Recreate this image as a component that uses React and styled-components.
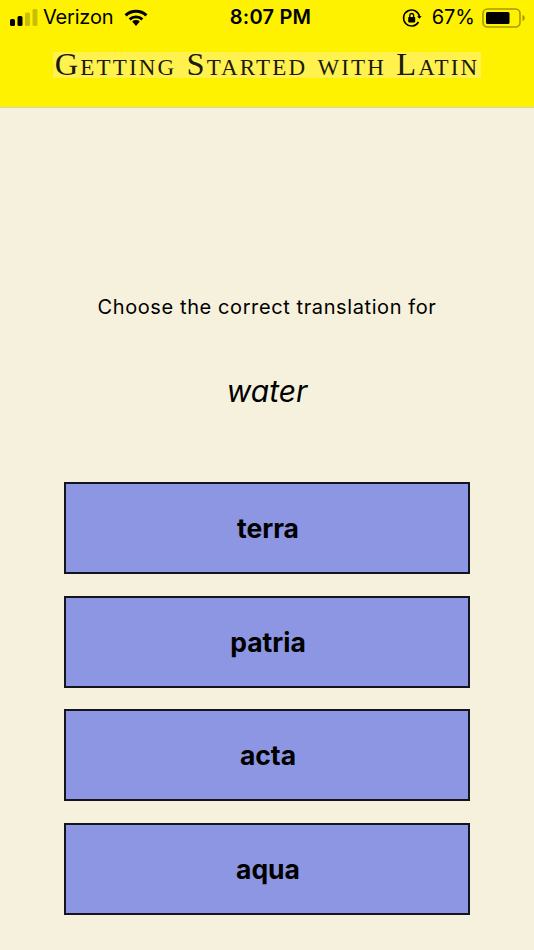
import styled, { createGlobalStyle } from "styled-components";

const GlobalStyle = createGlobalStyle`
  html, body {
    margin: 0;
    padding: 0;
    height: 100%;
    background: #f6f1dc;
  }
  body {
    font-family: Inter, "Liberation Sans", sans-serif;
    color: #000;
  }
`;

const Page = styled.div`
  width: 534px;
  height: 950px;
  display: flex;
  flex-direction: column;
  overflow: hidden;
  background: #f6f1dc;
`;

const Header = styled.header`
  height: 107px;
  background: #fff200;
  border-bottom: 1px solid #d8d3b4;
  display: flex;
  flex-direction: column;
  align-items: center;
  flex-shrink: 0;
`;

const StatusBar = styled.div`
  width: 100%;
  height: 35px;
  margin-bottom: 17px;
  padding: 0 9px 0 10px;
  box-sizing: border-box;
  display: grid;
  grid-template-columns: 1fr auto 1fr;
  align-items: center;
  font-size: 20px;
  line-height: 35px;
`;

const StatusLeft = styled.div`
  display: flex;
  align-items: center;
  gap: 5px;
`;

const Carrier = styled.span`
  margin-right: 6px;
  letter-spacing: -0.2px;
`;

const Clock = styled.span`
  margin-left: 6px;
  font-weight: 600;
  letter-spacing: 0.2px;
`;

const StatusRight = styled.div`
  display: flex;
  align-items: center;
  justify-content: flex-end;
  gap: 10px;
`;

const Percent = styled.span`
  margin-right: -3px;
`;

const LogoText = styled.div`
  width: 428px;
  height: 26px;
  background: #fff24f;
  color: #1c1a0a;
  font-family: "Liberation Serif", serif;
  font-variant: small-caps;
  font-size: 32.5px;
  line-height: 25px;
  letter-spacing: 2.15px;
  text-align: center;
  white-space: nowrap;
`;

const Main = styled.main`
  flex: 1;
  display: flex;
  flex-direction: column;
  align-items: center;
  padding-top: 187px;
`;

const Prompt = styled.p`
  margin: 0 0 54px;
  font-size: 20px;
  line-height: 24px;
  letter-spacing: 0.6px;
`;

const Word = styled.p`
  margin: 0 0 73px;
  font-size: 30px;
  line-height: 36px;
  font-style: italic;
`;

const Choices = styled.div`
  width: 406px;
  display: flex;
  flex-direction: column;
  gap: 21.6px;
`;

const Choice = styled.button`
  height: 92px;
  padding: 0 0 0 2px;
  background: #8c96e2;
  border: 2px solid #14141f;
  color: #000;
  font-family: Inter, "Liberation Sans", sans-serif;
  font-size: 26.5px;
  font-weight: 700;
`;

const SignalBars = () => (
  <svg width="28" height="17" viewBox="0 0 28 17">
    <rect x="0" y="10" width="5" height="7" rx="1.5" fill="#000" />
    <rect x="7.5" y="7" width="5" height="10" rx="1.5" fill="#000" />
    <rect x="15" y="3.5" width="5" height="13.5" rx="1.5" fill="#c9bf00" />
    <rect x="22.5" y="0" width="5" height="17" rx="1.5" fill="#c9bf00" />
  </svg>
);

const WifiIcon = () => (
  <svg width="24" height="17" viewBox="0 0 24 17">
    <path d="M12 17l-3.8-4.4a5.6 5.6 0 0 1 7.6 0z" fill="#000" />
    <path d="M1.6 6.4a15.4 15.4 0 0 1 20.8 0" fill="none" stroke="#000" strokeWidth="3" />
    <path d="M5.6 10.4a9.6 9.6 0 0 1 12.8 0" fill="none" stroke="#000" strokeWidth="2.8" />
  </svg>
);

const RotationLock = () => (
  <svg width="20" height="20" viewBox="0 0 20 20">
    <path d="M16.5 14a8 8 0 1 1 1-5" fill="none" stroke="#000" strokeWidth="1.6" />
    <path d="M19.6 8l-2 2.8L15 8.6z" fill="#000" />
    <rect x="6.2" y="9" width="7" height="5.4" rx="0.8" fill="#000" />
    <path d="M7.8 9V7.4a1.9 1.9 0 0 1 3.8 0V9" fill="none" stroke="#000" strokeWidth="1.3" />
  </svg>
);

const BatteryIcon = () => (
  <svg width="43" height="20" viewBox="0 0 43 20">
    <rect x="1" y="1" width="37" height="18" rx="4.5" fill="none" stroke="#a39a00" strokeWidth="1.6" />
    <rect x="4" y="4" width="23.5" height="12" rx="1.5" fill="#000" />
    <path d="M40.5 7c1.5.4 2.2 1.5 2.2 3s-.7 2.6-2.2 3z" fill="#a39a00" />
  </svg>
);

const choices = ["terra", "patria", "acta", "aqua"];

const App = () => {
  return (
    <Page>
      <GlobalStyle />
      <Header>
        <StatusBar>
          <StatusLeft>
            <SignalBars />
            <Carrier>Verizon</Carrier>
            <WifiIcon />
          </StatusLeft>
          <Clock>8:07 PM</Clock>
          <StatusRight>
            <RotationLock />
            <Percent>67%</Percent>
            <BatteryIcon />
          </StatusRight>
        </StatusBar>
        <LogoText>Getting Started with Latin</LogoText>
      </Header>
      <Main>
        <Prompt>Choose the correct translation for</Prompt>
        <Word>water</Word>
        <Choices>
          {choices.map((c) => (
            <Choice key={c} type="button">
              {c}
            </Choice>
          ))}
        </Choices>
      </Main>
    </Page>
  );
};

export default App;
